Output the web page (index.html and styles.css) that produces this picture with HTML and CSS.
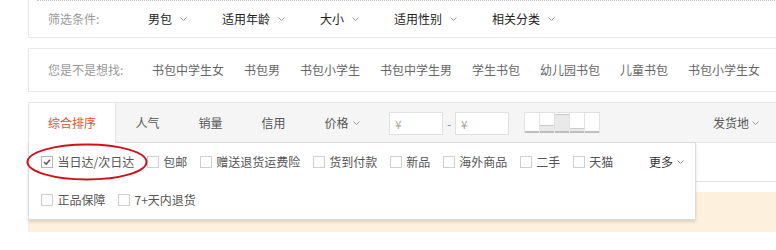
FILE: index.html
```html
<!DOCTYPE html>
<html lang="zh-CN">
<head>
<meta charset="utf-8">
<title>筛选</title>
<link rel="stylesheet" href="styles.css">
</head>
<body>
<div class="page">
  <div class="filter-box">
    <div class="filter-row">
      <span class="label">筛选条件:</span>
      <span class="opt">男包<svg class="chev" viewBox="0 0 7 4"><polyline points="0.5,0.5 3.5,3.5 6.5,0.5"/></svg></span>
      <span class="opt">适用年龄<svg class="chev" viewBox="0 0 7 4"><polyline points="0.5,0.5 3.5,3.5 6.5,0.5"/></svg></span>
      <span class="opt">大小<svg class="chev" viewBox="0 0 7 4"><polyline points="0.5,0.5 3.5,3.5 6.5,0.5"/></svg></span>
      <span class="opt">适用性别<svg class="chev" viewBox="0 0 7 4"><polyline points="0.5,0.5 3.5,3.5 6.5,0.5"/></svg></span>
      <span class="opt">相关分类<svg class="chev" viewBox="0 0 7 4"><polyline points="0.5,0.5 3.5,3.5 6.5,0.5"/></svg></span>
    </div>
  </div>

  <div class="suggest-box">
    <span class="label s-label">您是不是想找:</span>
    <span class="sug">书包中学生女</span>
    <span class="sug">书包男</span>
    <span class="sug">书包小学生</span>
    <span class="sug">书包中学生男</span>
    <span class="sug">学生书包</span>
    <span class="sug">幼儿园书包</span>
    <span class="sug">儿童书包</span>
    <span class="sug">书包小学生女</span>
  </div>

  <div class="sort-area">
    <div class="sortbar">
      <span class="tab active">综合排序</span>
      <span class="tab">人气</span>
      <span class="tab">销量</span>
      <span class="tab">信用</span>
      <span class="tab price-tab">价格<svg class="chev" viewBox="0 0 7 4"><polyline points="0.5,0.5 3.5,3.5 6.5,0.5"/></svg></span>
      <div class="price">
        <span class="pin">¥</span><span class="dash">-</span><span class="pin">¥</span>
      </div>
      <div class="hist">
        <div class="col"><div class="fill f1"></div></div>
        <div class="col"><div class="fill f2"></div></div>
        <div class="col"><div class="fill f3"></div></div>
        <div class="col"><div class="fill f4"></div></div>
        <div class="col"><div class="fill f1"></div></div>
      </div>
      <span class="ship">发货地<svg class="chev" viewBox="0 0 7 4"><polyline points="0.5,0.5 3.5,3.5 6.5,0.5"/></svg></span>
    </div>
    <div class="under-row"></div>
    <div class="tip"></div>

    <div class="panel">
      <div class="prow">
        <span class="ck"><span class="cb checked"><svg viewBox="0 0 10 10"><polyline points="2,5 4.2,7.2 8,2.8"/></svg></span>当日达/次日达</span>
        <span class="ck"><span class="cb"></span>包邮</span>
        <span class="ck"><span class="cb"></span>赠送退货运费险</span>
        <span class="ck"><span class="cb"></span>货到付款</span>
        <span class="ck"><span class="cb"></span>新品</span>
        <span class="ck"><span class="cb"></span>海外商品</span>
        <span class="ck"><span class="cb"></span>二手</span>
        <span class="ck"><span class="cb"></span>天猫</span>
        <span class="more">更多<svg class="chev" viewBox="0 0 7 4"><polyline points="0.5,0.5 3.5,3.5 6.5,0.5"/></svg></span>
      </div>
      <div class="prow">
        <span class="ck"><span class="cb"></span>正品保障</span>
        <span class="ck"><span class="cb"></span>7+天内退货</span>
      </div>
    </div>

    <svg class="mark" viewBox="0 0 124 40"><ellipse cx="62" cy="20" rx="59.5" ry="17.5"/></svg>
  </div>
</div>
</body>
</html>
```

FILE: styles.css
```css
html, body {
  margin: 0;
  padding: 0;
  background: #fff;
  overflow: hidden;
}
body {
  font-family: "Noto Sans CJK SC", "Noto Sans", sans-serif;
  font-size: 12px;
  line-height: 16px;
  color: #333;
}
.page {
  margin-left: 28px;
  width: 780px;
}

/* filter box */
.filter-box {
  border: 1px solid #e8e8e8;
  border-top: 0;
}
.filter-row {
  margin-left: 8px;
  border-top: 1px dotted #c8c8c8;
  height: 36px;
  display: flex;
  align-items: center;
  padding-left: 11px;
}
.label {
  color: #999;
  flex: none;
}
.filter-row .label { width: 100px; }
.opt {
  display: flex;
  align-items: center;
  color: #222;
  margin-right: 35px;
}
.chev {
  width: 7px;
  height: 4px;
  flex: none;
  fill: none;
  stroke: #999;
  stroke-width: 1;
}
.opt .chev { margin-left: 8px; }

/* suggest box */
.suggest-box {
  margin-top: 10px;
  border: 1px solid #e8e8e8;
  height: 42px;
  display: flex;
  align-items: center;
  padding-left: 19px;
}
.s-label { width: 104px; }
.sug {
  color: #666;
  margin-right: 20px;
  white-space: nowrap;
}

/* sort area */
.sort-area {
  position: relative;
  margin-top: 10px;
}
.sortbar {
  display: flex;
  align-items: center;
  height: 39px;
  border: 1px solid #e5e5e5;
  background: #f5f5f5;
}
.tab {
  padding: 0 19.5px;
  color: #555;
  display: flex;
  align-items: center;
  white-space: nowrap;
}
.tab.active {
  align-self: stretch;
  margin-bottom: -1px;
  padding: 0 19px;
  background: #fff;
  border-right: 1px solid #e5e5e5;
  color: #e5511d;
  position: relative;
  z-index: 3;
}
.price-tab { padding-right: 0; }
.price-tab .chev { margin-left: 4px; }
.price {
  display: flex;
  align-items: center;
  margin-left: 29.5px;
  margin-top: 2px;
}
.pin {
  box-sizing: border-box;
  width: 54px;
  height: 23px;
  border: 1px solid #e0e0e0;
  background: #fff;
  color: #aaa;
  padding-left: 5px;
  line-height: 21px;
}
.dash {
  width: 12px;
  text-align: center;
  color: #888;
}
.hist {
  margin-left: 15px;
  display: flex;
  align-items: flex-end;
  height: 21px;
  border-right: 1px solid #e2e2e2;
}
.col {
  box-sizing: border-box;
  width: 15px;
  height: 21px;
  border-left: 1px solid #e2e2e2;
  border-top: 1px solid #e2e2e2;
  background: #fff;
  display: flex;
  align-items: flex-end;
}
.fill {
  flex: 1;
  box-sizing: border-box;
  background: #e9e9e9;
  border-top: 1px solid #c9c9c9;
  border-bottom: 2px solid #bdbdbd;
}
.f1 { height: 2px; border-top: 0; }
.f2 { height: 8px; }
.f3 { height: 19px; }
.f4 { height: 5px; }
.ship {
  margin-left: 113px;
  color: #555;
  display: flex;
  align-items: center;
}
.ship .chev { margin-left: 3px; }

.under-row {
  height: 38px;
  border-bottom: 1px solid #e2e2e2;
}
.tip {
  margin-top: 10px;
  height: 40px;
  background: #fdf0dc;
}

/* dropdown panel */
.panel {
  position: absolute;
  z-index: 2;
  left: 0;
  top: 40px;
  box-sizing: border-box;
  width: 668px;
  height: 78px;
  background: #fff;
  border: 1px solid #dcdcdc;
  box-shadow: 0 2px 3px rgba(0, 0, 0, 0.13);
  padding-left: 12px;
  padding-right: 11px;
}
.prow {
  height: 38px;
  display: flex;
  align-items: center;
}
.ck {
  display: flex;
  align-items: center;
  color: #555;
  margin-right: 12.5px;
  white-space: nowrap;
}
.cb {
  box-sizing: border-box;
  width: 12px;
  height: 12px;
  border: 1px solid #cfcfcf;
  background: #fff;
  margin-right: 4.5px;
  flex: none;
  display: flex;
}
.cb.checked { border-color: #b5b5b5; }
.cb svg {
  width: 10px;
  height: 10px;
  fill: none;
  stroke: #555;
  stroke-width: 1.6;
}
.more {
  margin-left: auto;
  display: flex;
  align-items: center;
  color: #333;
}
.more .chev { margin-left: 4px; }

/* annotation */
.mark {
  position: absolute;
  z-index: 4;
  left: -3px;
  top: 40px;
  width: 124px;
  height: 40px;
  fill: none;
  stroke: #d0101c;
  stroke-width: 2;
}
```
